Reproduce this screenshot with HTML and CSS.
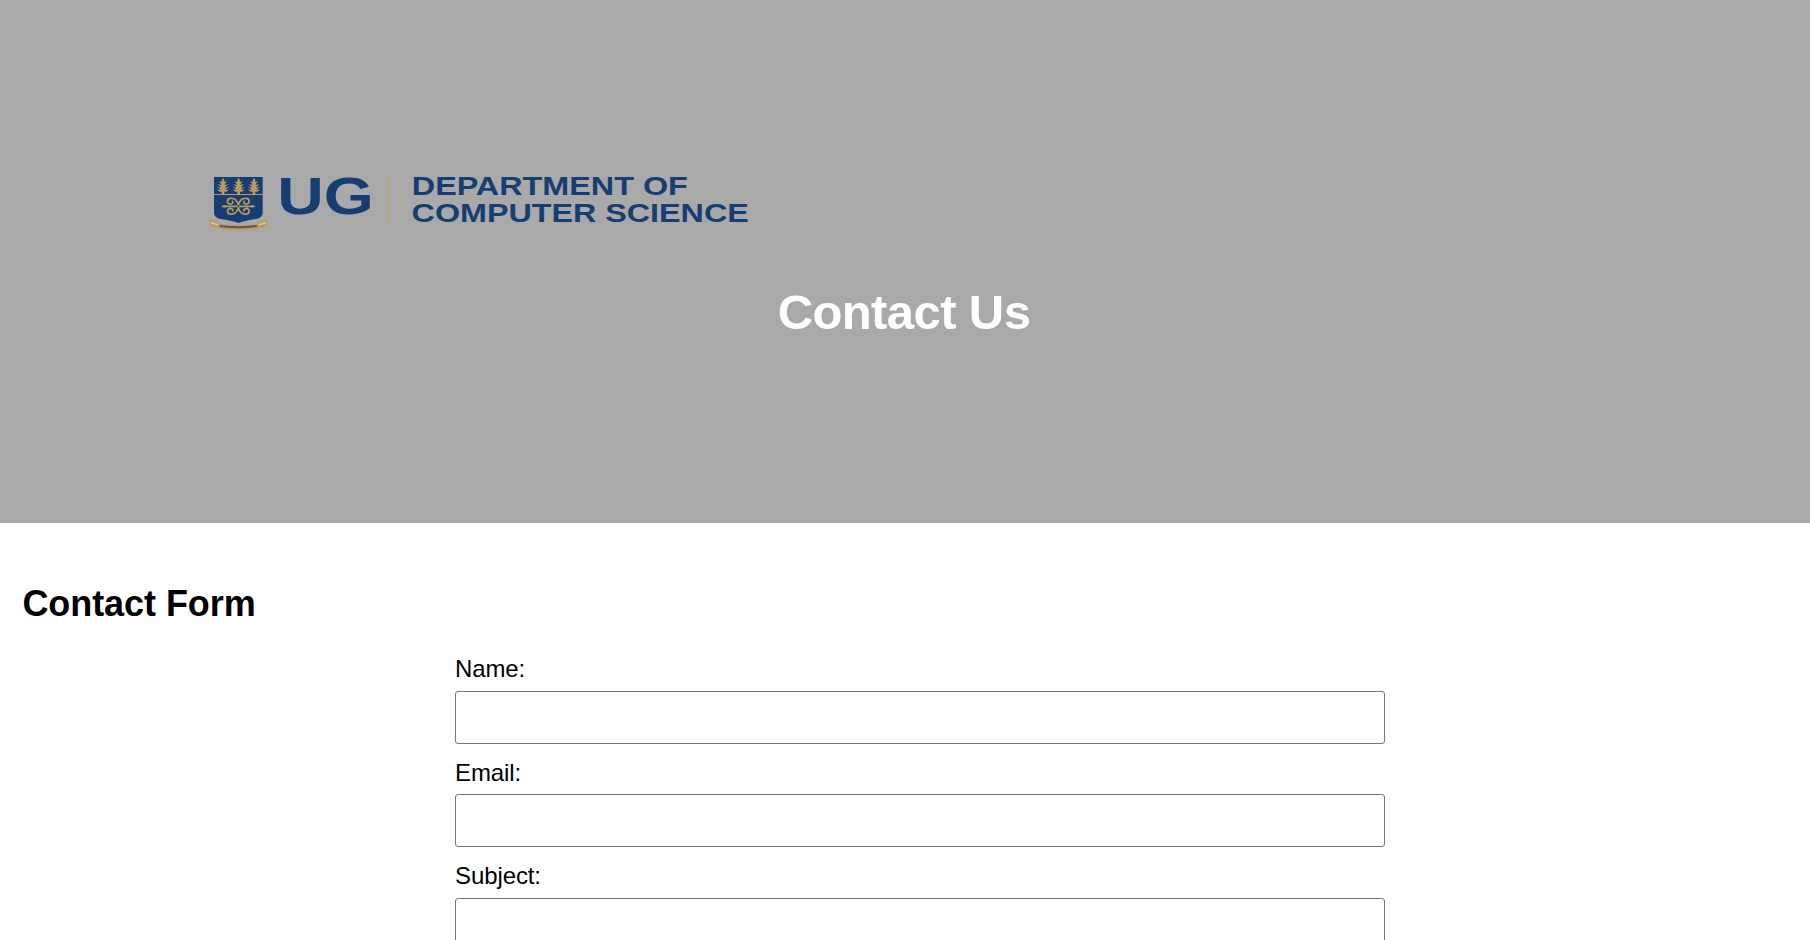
FILE: index.html
```html
<!DOCTYPE html>
<html lang="en">
<head>
<meta charset="utf-8">
<title>Contact Us</title>
<link rel="stylesheet" href="styles.css">
</head>
<body>
<header class="hero">
  <svg class="logo" width="560" height="75" viewBox="0 0 560 75" role="img" aria-label="UG Department of Computer Science">
    <defs>
      <g id="tree">
        <path d="M0 -2L4 6L4 11L12 9L5 18L6 20L16 17L7 26L8 28L19 25L9 33L10 35L19 33L10 40L4 40V47H-4V40L-10 40L-19 33L-10 35L-9 33L-19 25L-8 28L-7 26L-16 17L-6 20L-5 18L-12 9L-4 11L-4 6Z"/>
      </g>
    </defs>
    <g transform="scale(.33333)">
      <path class="navy" d="M42 36H188V143Q188 158 168 162Q136 166 115 174Q94 166 62 162Q42 158 42 143Z"/>
      <g class="gold">
        <use href="#tree" x="69" y="40"/>
        <use href="#tree" x="116" y="40"/>
        <use href="#tree" x="162" y="40"/>
        <path d="M42 87H188V90H42Z"/>
        <path d="M26 163Q38 165 54 172L60 177Q116 186 171 177L177 171Q190 165 204 163L199 175L204 184L180 189Q116 201 52 189L28 184L33 175Z"/>
        <path d="M62 124L76 120V128ZM168 124L154 120V128Z"/>
      </g>
      <g class="scroll">
        <path d="M68 124H162M115 124C115 108 104 98 90 100C80 102 80 116 90 117C98 118 101 112 96 108M115 124C115 108 126 98 140 100C150 102 150 116 140 117C132 118 129 112 134 108M115 124C115 140 104 149 90 147C80 145 80 132 90 130C98 130 101 136 96 139M115 124C115 140 126 149 140 147C150 145 150 132 140 130C132 130 129 136 134 139"/>
      </g>
      <circle class="navy" cx="115" cy="124" r="3"/>
      <path class="motto" d="M60 183Q116 190 170 183"/>
      <path class="fold" d="M32 173L54 180M198 173L176 180"/>
    </g>
    <text class="word" x="77.300" y="49" font-size="52.500" textLength="96.500" lengthAdjust="spacingAndGlyphs">UG</text>
    <rect class="rule" x="188" y="10" width="1.600" height="49"/>
    <text class="word" x="211.800" y="30.200" font-size="25.700" textLength="276" lengthAdjust="spacingAndGlyphs">DEPARTMENT OF</text>
    <text class="word" x="211.600" y="56.700" font-size="25.700" textLength="337.200" lengthAdjust="spacingAndGlyphs">COMPUTER SCIENCE</text>
  </svg>
  <h1 class="hero-title">Contact Us</h1>
</header>
<main class="contact">
  <h2 class="section-title">Contact Form</h2>
  <form class="form">
    <label class="label" for="name">Name:</label>
    <input class="field" id="name" type="text">
    <label class="label" for="email">Email:</label>
    <input class="field" id="email" type="email">
    <label class="label" for="subject">Subject:</label>
    <input class="field" id="subject" type="text">
  </form>
</main>
</body>
</html>
```
FILE: styles.css
```css
* {
  box-sizing: border-box;
}

body {
  margin: 0;
  height: 940px;
  overflow: hidden;
  background: #fff;
  color: #000;
  font-family: "Liberation Sans", Arial, sans-serif;
}

.hero {
  height: 523px;
  padding-top: 165px;
  background: #a9a9a9;
}

.logo {
  display: block;
  margin-left: 200px;
}

.navy,
.word {
  fill: #163e73;
}

.word {
  font-family: "Liberation Sans", Arial, sans-serif;
  font-weight: bold;
}

.gold {
  fill: #b99a5f;
}

.rule {
  fill: #b9a47d;
}

.scroll {
  fill: none;
  stroke: #b99a5f;
  stroke-width: 5;
}

.motto {
  fill: none;
  stroke: #4b4b4b;
  stroke-width: 6;
  stroke-dasharray: 5 1;
}

.fold {
  fill: none;
  stroke: #dbc393;
  stroke-width: 5;
}

.hero-title {
  margin: 45px 0 0;
  padding-right: 2px;
  color: #fff;
  font-size: 49px;
  line-height: 54px;
  letter-spacing: -0.6px;
  text-align: center;
}

.contact {
  padding: 60px 22px 0;
}

.section-title {
  margin: 0;
  padding-left: 0.4px;
  font-size: 36px;
  line-height: 42px;
  letter-spacing: -0.06px;
}

.form {
  width: 930px;
  margin: 30.2px 0 0 433px;
}

.label {
  display: block;
  height: 35.7px;
  font-size: 24px;
  line-height: 27px;
  letter-spacing: -0.1px;
}

.field {
  display: block;
  width: 930px;
  height: 53px;
  margin: 0 0 14.7px;
  padding: 12px;
  border: 1px solid #767676;
  border-radius: 3px;
  background: #fff;
  font: 24px "Liberation Sans", Arial, sans-serif;
}
```
